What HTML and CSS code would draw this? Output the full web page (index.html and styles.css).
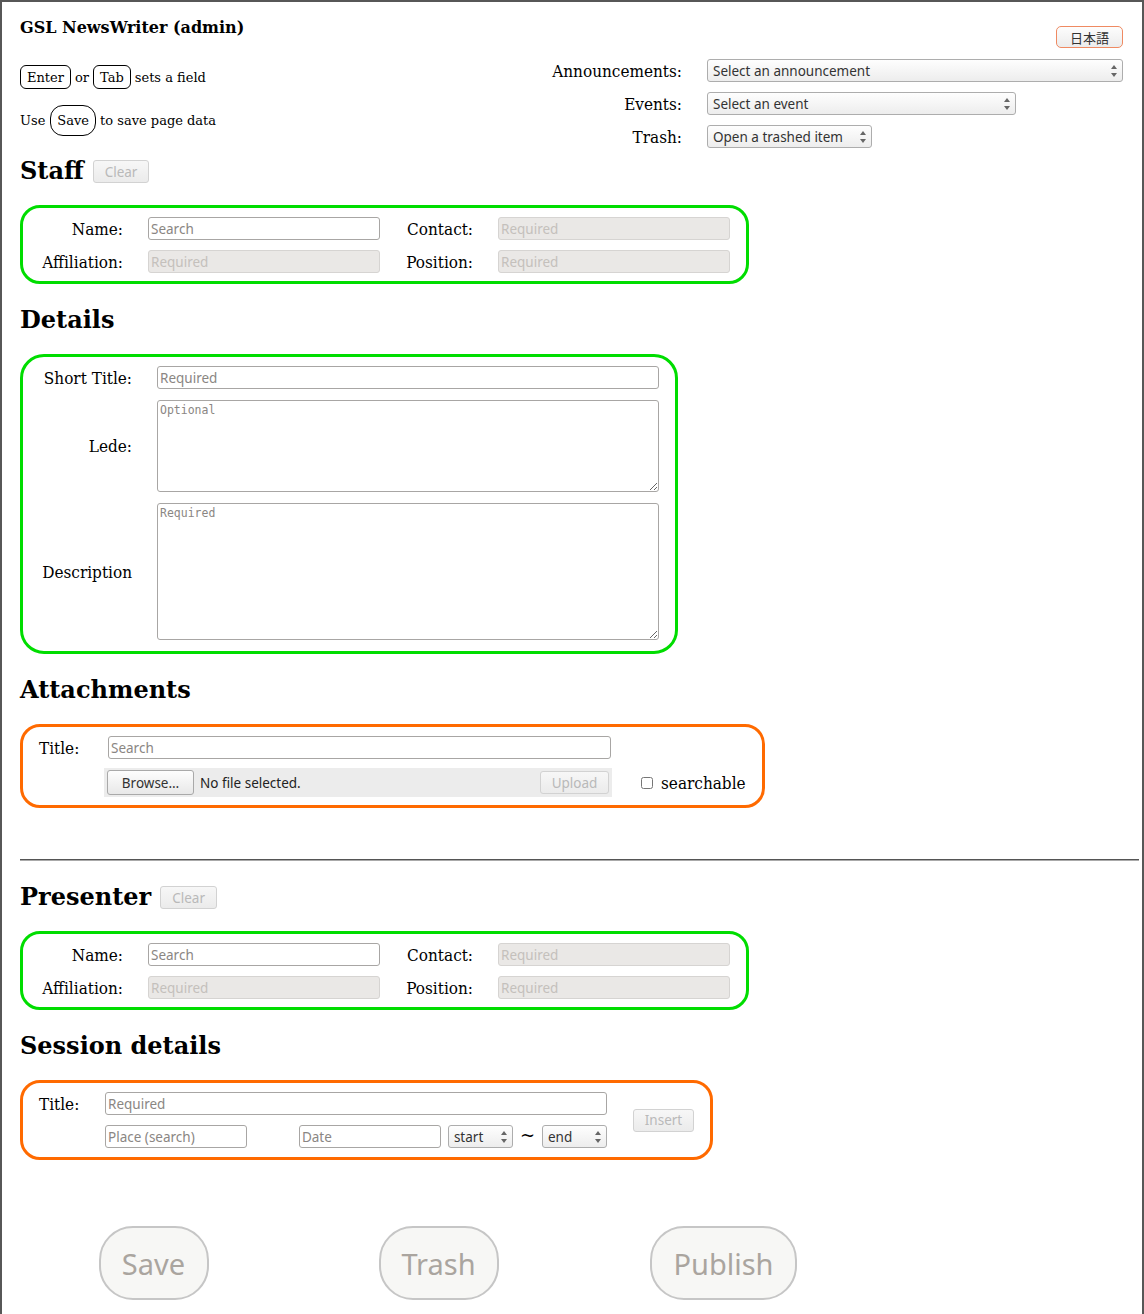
FILE: index.html
```html
<!DOCTYPE html>
<html lang="en">
<head>
  <meta charset="UTF-8" />
  <title>GSL NewsWriter (admin)</title>
  <link rel="stylesheet" href="styles.css">
</head>
<body>
<div class="page">

  <div class="top">
    <div class="intro">
      <h1>GSL NewsWriter (admin)</h1>
      <p class="hint"><span class="key">Enter</span> or <span class="key">Tab</span> sets a field</p>
      <p class="hint">Use <span class="key tall">Save</span> to save page data</p>
    </div>
    <div class="pickers">
      <button class="lang">日本語</button>
      <div class="picker-grid">
        <label class="lbl right">Announcements:</label>
        <span class="sel"><select class="w-ann"><option>Select an announcement</option></select></span>
        <label class="lbl right">Events:</label>
        <span class="sel"><select class="w-evt"><option>Select an event</option></select></span>
        <label class="lbl right">Trash:</label>
        <span class="sel"><select class="w-trash"><option>Open a trashed item</option></select></span>
      </div>
    </div>
  </div>

  <div class="head first">
    <h2>Staff</h2>
    <button class="small" disabled>Clear</button>
  </div>
  <div class="box green person">
    <label class="lbl right">Name:</label>
    <input type="text" placeholder="Search">
    <label class="lbl right">Contact:</label>
    <input type="text" placeholder="Required" disabled>
    <label class="lbl right">Affiliation:</label>
    <input type="text" placeholder="Required" disabled>
    <label class="lbl right">Position:</label>
    <input type="text" placeholder="Required" disabled>
  </div>

  <div class="head">
    <h2>Details</h2>
  </div>
  <div class="box green details">
    <label class="lbl right">Short Title:</label>
    <input type="text" placeholder="Required">
    <label class="lbl right">Lede:</label>
    <textarea class="lede" placeholder="Optional"></textarea>
    <label class="lbl right">Description</label>
    <textarea class="desc" placeholder="Required"></textarea>
  </div>

  <div class="head">
    <h2>Attachments</h2>
  </div>
  <div class="box orange attach">
    <label class="lbl">Title:</label>
    <input type="text" class="att-title" placeholder="Search">
    <span></span>
    <span></span>
    <div class="file-row">
      <button class="browse">Browse…</button>
      <span class="file-name">No file selected.</span>
      <button class="small upload" disabled>Upload</button>
    </div>
    <label class="lbl check"><input type="checkbox"> searchable</label>
  </div>

  <hr>

  <div class="head">
    <h2>Presenter</h2>
    <button class="small" disabled>Clear</button>
  </div>
  <div class="box green person">
    <label class="lbl right">Name:</label>
    <input type="text" placeholder="Search">
    <label class="lbl right">Contact:</label>
    <input type="text" placeholder="Required" disabled>
    <label class="lbl right">Affiliation:</label>
    <input type="text" placeholder="Required" disabled>
    <label class="lbl right">Position:</label>
    <input type="text" placeholder="Required" disabled>
  </div>

  <div class="head">
    <h2>Session details</h2>
  </div>
  <div class="box orange session">
    <label class="lbl">Title:</label>
    <input type="text" placeholder="Required">
    <button class="small insert" disabled>Insert</button>
    <span></span>
    <div class="when-row">
      <input type="text" class="short" placeholder="Place (search)">
      <div class="when">
        <input type="text" class="short" placeholder="Date">
        <span class="sel"><select class="w-time"><option>start</option></select></span>
        <span class="tilde">~</span>
        <span class="sel"><select class="w-time"><option>end</option></select></span>
      </div>
    </div>
  </div>

  <div class="actions">
    <button class="big w-save" disabled>Save</button>
    <button class="big w-trash-btn" disabled>Trash</button>
    <button class="big w-publish" disabled>Publish</button>
  </div>

</div>
</body>
</html>
```

FILE: styles.css
```css
html, body {
  margin: 0;
}

body {
  font-family: 'DejaVu Serif', serif;
  color: #000;
  background: #fff;
}

.page {
  min-height: 100vh;
  box-sizing: border-box;
  border: 2px solid #575757;
  border-bottom-width: 3px;
  padding: 16px 3px 20px 18px;
}

/* header */
.top {
  display: flex;
  justify-content: space-between;
  align-items: flex-start;
  margin-right: 16px;
}

.intro h1 {
  font-size: 16px;
  line-height: 19px;
  margin: 0 0 28px;
}

.hint {
  display: flex;
  align-items: center;
  gap: 4px;
  font-size: 13px;
  margin: 0;
}

.hint + .hint {
  margin-top: 16px;
}

.key {
  display: inline-flex;
  align-items: center;
  box-sizing: border-box;
  height: 24px;
  padding: 0 6px;
  border: 1px solid #000;
  border-radius: 6px;
}

.key.tall {
  height: 31px;
  border-radius: 13px;
  margin-left: 1px;
}

.pickers {
  display: flex;
  flex-direction: column;
  align-items: flex-end;
  padding-top: 8px;
}

.lang {
  width: 67px;
  height: 22px;
  margin-bottom: 11px;
  border: 1px solid #ef8a62;
  border-radius: 5px;
  background: linear-gradient(#fdfdfd, #ececec);
  font-family: 'Noto Sans CJK JP', sans-serif;
  font-size: 13px;
  color: #333;
  padding: 0;
}

.picker-grid {
  display: grid;
  grid-template-columns: auto auto;
  column-gap: 25px;
  row-gap: 10px;
  align-items: center;
}

/* labels */
.lbl {
  font-size: 17px;
  font-stretch: condensed;
}

.lbl.right {
  text-align: right;
  justify-self: end;
}

/* selects */
.sel {
  position: relative;
  display: inline-block;
  justify-self: start;
}

.sel select {
  appearance: none;
  height: 23px;
  box-sizing: border-box;
  border: 1px solid #adadad;
  border-radius: 3px;
  background: linear-gradient(#fefefe, #ededed);
  font-family: 'Noto Sans', sans-serif;
  font-size: 13.5px;
  color: #333;
  padding: 0 5px;
  display: block;
}

.sel::before,
.sel::after {
  content: "";
  position: absolute;
  right: 6px;
  border-left: 3px solid transparent;
  border-right: 3px solid transparent;
}

.sel::before {
  top: 6px;
  border-bottom: 4px solid #666;
}

.sel::after {
  bottom: 5px;
  border-top: 4px solid #666;
}

.w-ann { width: 416px; }
.w-evt { width: 309px; }
.w-trash { width: 165px; }
.w-time { width: 65px; }

/* section heads */
.head {
  display: flex;
  align-items: center;
  gap: 9px;
  height: 30px;
  margin: 20px 0;
}

.head.first {
  margin-top: 7px;
}

.head h2 {
  font-size: 24px;
  margin: 0;
}

button.small {
  height: 23px;
  padding: 0 11px;
  border: 1px solid #d2d2d2;
  border-radius: 3px;
  background: linear-gradient(#f7f7f7, #ebebeb);
  font-family: 'Noto Sans', sans-serif;
  font-size: 13.5px;
  color: #b9b9b9;
}

.head button.small {
  margin-top: 3px;
}

/* boxes */
.box {
  display: grid;
  width: max-content;
  border: 3px solid #00dd00;
  border-radius: 20px;
  padding: 9px 16px;
  column-gap: 25px;
  row-gap: 10px;
  align-items: center;
}

.box.orange {
  border-color: #ff6a00;
}

input[type=text],
textarea {
  box-sizing: border-box;
  height: 23px;
  border: 1px solid #a8a6a4;
  border-radius: 3px;
  background: #fff;
  font-family: 'Noto Sans', sans-serif;
  font-size: 13.5px;
  padding: 0 2px;
  margin: 0;
}

input[type=text]:disabled {
  background: #eae8e6;
  border-color: #d6d4d2;
}

input::placeholder {
  color: #8a8683;
}

input:disabled::placeholder {
  color: #c4c0bc;
}

.person {
  grid-template-columns: 84px 232px 68px 232px;
  padding-bottom: 8px;
}

.details {
  grid-template-columns: 93px 502px;
  row-gap: 11px;
  border-radius: 24px;
  padding-bottom: 11px;
}

textarea {
  font-family: 'DejaVu Sans Mono', monospace;
  font-size: 11.5px;
  padding: 2px 2px;
}

textarea::placeholder {
  color: #8a8683;
}

.lede { height: 92px; }
.desc { height: 137px; }

.attach {
  grid-template-columns: 65px 508px auto;
  column-gap: 0;
  row-gap: 9px;
  padding-bottom: 8px;
}

.att-title {
  margin-left: 4px !important;
  width: 503px;
}

.file-row {
  display: flex;
  align-items: center;
  height: 29px;
  padding: 0 3px;
  background: #ececec;
  font-family: 'Noto Sans', sans-serif;
  font-size: 13.5px;
  color: #222;
}

.browse {
  height: 25px;
  width: 87px;
  border: 1px solid #a9a9a9;
  border-radius: 3px;
  background: linear-gradient(#fdfdfd, #e8e8e8);
  font-family: 'Noto Sans', sans-serif;
  font-size: 13.5px;
  color: #333;
  padding: 0;
  margin-right: 6px;
}

.upload {
  margin-left: auto;
  width: 69px;
  padding: 0 !important;
}

.check {
  display: flex;
  align-items: center;
  gap: 8px;
  margin-left: 29px;
}

.check input {
  margin: 0;
  width: 12px;
  height: 12px;
}

hr {
  margin: 51px 0 0;
  border: 0;
  border-top: 1px solid #555;
  border-bottom: 1px solid #aaa;
}

.session {
  grid-template-columns: 66px 502px 87px;
  column-gap: 0;
}

.insert {
  grid-row: 1 / span 2;
  grid-column: 3;
  justify-self: end;
  width: 61px;
  padding: 0 !important;
}

.when-row {
  display: flex;
  align-items: center;
}

.short {
  width: 142px;
}

.when {
  display: flex;
  align-items: center;
  gap: 7px;
  margin-left: auto;
}

.tilde {
  font-size: 18px;
  margin-top: -4px;
}

/* bottom actions */
.actions {
  display: grid;
  grid-template-columns: repeat(3, 285px);
  justify-items: center;
  margin: 66px 0 0 -9px;
}

.big {
  height: 74px;
  border: 2px solid #c6c6c6;
  border-radius: 34px;
  background: #f7f7f5;
  font-family: 'Noto Sans', sans-serif;
  font-size: 29px;
  color: #aaa59f;
  padding: 0;
}

.w-save { width: 110px; }
.w-trash-btn { width: 120px; }
.w-publish { width: 147px; }
```
